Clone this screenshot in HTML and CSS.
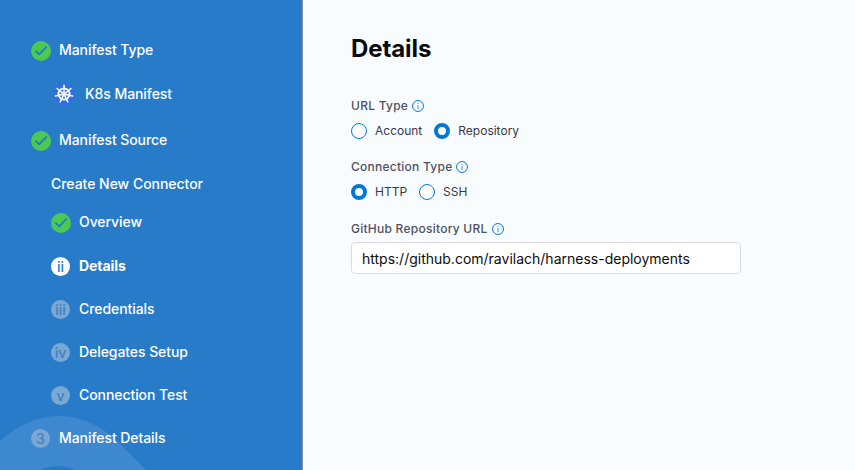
FILE: index.html
```
<!DOCTYPE html>
<html lang="en">
<head>
<meta charset="utf-8">
<title>Manifest wizard</title>
<link rel="stylesheet" href="styles.css">
</head>
<body>
<svg class="defs" width="0" height="0" aria-hidden="true">
  <symbol id="check" viewBox="0 0 20 20"><circle cx="10" cy="10" r="10" fill="#4dc952"/><path d="M4.9 10.2 8.2 13.3 15.3 6" fill="none" stroke="#157bcb" stroke-width="1.7" stroke-linecap="round" stroke-linejoin="round"/></symbol>
  <symbol id="info" viewBox="0 0 12 12"><circle cx="6" cy="6" r="5.45" fill="none" stroke="#0278d5" stroke-width="1"/><path d="M6 5v4M6 3v1" stroke="#0278d5" stroke-width="1" opacity=".8"/></symbol>
</svg>
<div class="wizard">
  <nav class="sidebar">
    <svg class="decor" viewBox="0 0 160 55" aria-hidden="true"><path d="M0 26C22 7 40 1 60 1C82 1 106 13 122 31L146 55H75C67 50 49 50 41 55H0Z" fill="#fff" fill-opacity=".1"/></svg>
    <ol class="steps">
      <li class="step"><svg class="check"><use href="#check"/></svg><span>Manifest Type</span></li>
      <li class="step kind">
        <svg class="helm" viewBox="0 0 24 24" fill="none" stroke="#fff" stroke-linecap="round"><path d="M12 1.5 20 5.3 22 14.2 16.5 22H7.5L2 14.2 4 5.3Z" fill="#326de6" stroke="#326de6" stroke-width="2" stroke-linejoin="round"/><circle cx="12" cy="12" r="5.6" stroke-width="1.8"/><circle cx="12" cy="12" r="1.2" fill="#fff"/><path d="M12 10V3.2M13.6 10.8 18.9 6.5M13.9 12.5 20.5 14M12.9 13.8 15.8 19.9M11.1 13.8 8.2 19.9M10.1 12.5 3.5 14M10.4 10.8 5.1 6.5" stroke-width="1.6"/></svg>
        <span>K8s Manifest</span></li>
      <li class="step source"><svg class="check"><use href="#check"/></svg><span>Manifest Source</span></li>
      <li class="step group"><span>Create New Connector</span></li>
      <li class="step sub overview"><svg class="check"><use href="#check"/></svg><span>Overview</span></li>
      <li class="step sub active"><i class="badge">ii</i><span>Details</span></li>
      <li class="step sub"><i class="badge">iii</i><span>Credentials</span></li>
      <li class="step sub"><i class="badge">iv</i><span>Delegates Setup</span></li>
      <li class="step sub"><i class="badge">v</i><span>Connection Test</span></li>
      <li class="step"><i class="badge">3</i><span>Manifest Details</span></li>
    </ol>
  </nav>
  <main class="content">
    <h1>Details</h1>
    <div class="label"><span>URL Type</span><svg class="info"><use href="#info"/></svg></div>
    <div class="radios">
      <span class="radio"></span><span class="option">Account</span>
      <span class="radio checked"></span><span class="option">Repository</span>
    </div>
    <div class="label"><span>Connection Type</span><svg class="info"><use href="#info"/></svg></div>
    <div class="radios">
      <span class="radio checked"></span><span class="option">HTTP</span>
      <span class="radio"></span><span class="option">SSH</span>
    </div>
    <div class="label last"><span>GitHub Repository URL</span><svg class="info"><use href="#info"/></svg></div>
    <div class="field">https://github.com/ravilach/harness-deployments</div>
  </main>
</div>
</body>
</html>
```
FILE: styles.css
```
* { box-sizing: border-box; }
body { margin: 0; font-family: Inter, sans-serif; }
.defs { position: absolute; }
.wizard { display: flex; height: 470px; overflow: hidden; background: #f9fcff; }
.sidebar { position: relative; width: 303px; flex: none; background: #277bc9; border-right: 1px solid #8192a9; }
.decor { position: absolute; left: 0; bottom: 0; width: 160px; height: 55px; }
.steps { position: relative; list-style: none; margin: 0; padding: 40px 0 0 31px; }
.step { display: flex; align-items: center; height: 20px; margin-bottom: 23px; gap: 8px; color: #fff; font-size: 14px; line-height: 20px; font-weight: 500; letter-spacing: -.07px; white-space: nowrap; }
.step:first-child { margin-bottom: 24px; }
.kind { padding-left: 21px; gap: 9px; margin-bottom: 26px; }
.source { margin-bottom: 24px; }
.group { padding-left: 20px; margin-bottom: 18px; letter-spacing: -.03px; }
.sub { padding-left: 20px; }
.overview { margin-bottom: 24px; }
.active { font-weight: 700; }
.check { width: 20px; height: 20px; flex: none; position: relative; top: 1px; }
.helm { width: 24px; height: 24px; flex: none; }
.badge { width: 19px; height: 19px; margin-right: 1px; flex: none; border-radius: 50%; background: #7ba7d2; color: #3b82c9; font-style: normal; font-weight: 500; font-size: 14px; line-height: 19px; text-align: center; letter-spacing: 0; position: relative; top: .5px; }
.active .badge { background: #fff; color: #277bc9; }
.content { padding: 33px 0 0 48px; }
h1 { margin: 0 0 33px; font-size: 24px; line-height: 32px; font-weight: 650; letter-spacing: -.1px; color: #0b0b0d; }
.label { display: flex; align-items: center; height: 16px; margin-bottom: 9px; gap: 4px; font-size: 12px; font-weight: 500; line-height: 16px; letter-spacing: .25px; color: #4f5162; }
.label.last { margin-top: 21px; margin-bottom: 5px; }
.info { width: 12px; height: 12px; flex: none; }
.radios { display: flex; align-items: center; height: 16px; margin-bottom: 20px; font-size: 12px; line-height: 16px; letter-spacing: 0; color: #383946; }
.radio { width: 16px; height: 16px; margin-right: 8px; border: 1px solid #0278d5; border-radius: 50%; background: #fff; }
.radio.checked { border-width: 4px; }
.option { margin-right: 12px; }
.field { display: flex; align-items: center; width: 390px; height: 32px; padding: 1px 10px 0; border: 1px solid #d9dae5; border-radius: 4px; background: #fff; color: #0b0b0d; font-size: 14px; letter-spacing: 0; }
```
